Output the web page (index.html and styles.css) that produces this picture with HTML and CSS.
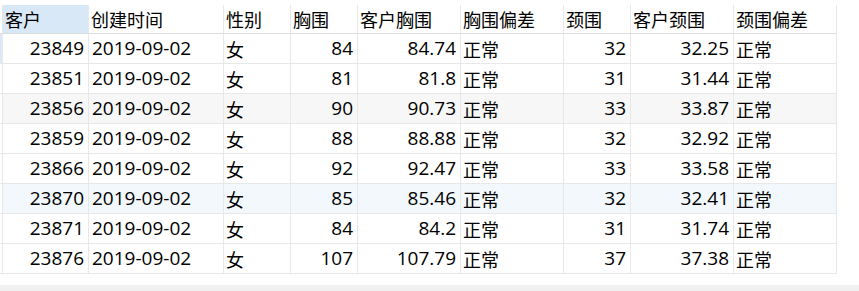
FILE: index.html
```html
<!DOCTYPE html>
<html lang="zh-CN">
<head>
<meta charset="utf-8">
<title>客户数据</title>
<link rel="stylesheet" href="styles.css">
</head>
<body>
<div class="grid">
  <div class="row head">
    <div class="gut"></div>
    <div class="c sel">客户</div>
    <div class="c">创建时间</div>
    <div class="c">性别</div>
    <div class="c">胸围</div>
    <div class="c">客户胸围</div>
    <div class="c">胸围偏差</div>
    <div class="c">颈围</div>
    <div class="c">客户颈围</div>
    <div class="c">颈围偏差</div>
  </div>
  <div class="row">
    <div class="gut cur"></div>
    <div class="c n r">23849</div><div class="c n">2019-09-02</div><div class="c">女</div>
    <div class="c n r">84</div><div class="c n r">84.74</div><div class="c">正常</div>
    <div class="c n r">32</div><div class="c n r">32.25</div><div class="c">正常</div>
  </div>
  <div class="row">
    <div class="gut"></div>
    <div class="c n r">23851</div><div class="c n">2019-09-02</div><div class="c">女</div>
    <div class="c n r">81</div><div class="c n r">81.8</div><div class="c">正常</div>
    <div class="c n r">31</div><div class="c n r">31.44</div><div class="c">正常</div>
  </div>
  <div class="row alt">
    <div class="gut"></div>
    <div class="c n r">23856</div><div class="c n">2019-09-02</div><div class="c">女</div>
    <div class="c n r">90</div><div class="c n r">90.73</div><div class="c">正常</div>
    <div class="c n r">33</div><div class="c n r">33.87</div><div class="c">正常</div>
  </div>
  <div class="row">
    <div class="gut"></div>
    <div class="c n r">23859</div><div class="c n">2019-09-02</div><div class="c">女</div>
    <div class="c n r">88</div><div class="c n r">88.88</div><div class="c">正常</div>
    <div class="c n r">32</div><div class="c n r">32.92</div><div class="c">正常</div>
  </div>
  <div class="row">
    <div class="gut"></div>
    <div class="c n r">23866</div><div class="c n">2019-09-02</div><div class="c">女</div>
    <div class="c n r">92</div><div class="c n r">92.47</div><div class="c">正常</div>
    <div class="c n r">33</div><div class="c n r">33.58</div><div class="c">正常</div>
  </div>
  <div class="row hover">
    <div class="gut"></div>
    <div class="c n r">23870</div><div class="c n">2019-09-02</div><div class="c">女</div>
    <div class="c n r">85</div><div class="c n r">85.46</div><div class="c">正常</div>
    <div class="c n r">32</div><div class="c n r">32.41</div><div class="c">正常</div>
  </div>
  <div class="row">
    <div class="gut"></div>
    <div class="c n r">23871</div><div class="c n">2019-09-02</div><div class="c">女</div>
    <div class="c n r">84</div><div class="c n r">84.2</div><div class="c">正常</div>
    <div class="c n r">31</div><div class="c n r">31.74</div><div class="c">正常</div>
  </div>
  <div class="row">
    <div class="gut"></div>
    <div class="c n r">23876</div><div class="c n">2019-09-02</div><div class="c">女</div>
    <div class="c n r">107</div><div class="c n r">107.79</div><div class="c">正常</div>
    <div class="c n r">37</div><div class="c n r">37.38</div><div class="c">正常</div>
  </div>
</div>
<div class="scrollbar"></div>
</body>
</html>
```
FILE: styles.css
```css
html, body {
  margin: 0;
  padding: 0;
  background: #ffffff;
  overflow: hidden;
  height: 291px;
}
body {
  font-family: "Microsoft YaHei", "Noto Sans CJK SC", "Noto Sans", sans-serif;
  font-size: 18px;
  color: #000000;
}
.grid {
  padding-top: 5px;
}
.row {
  display: grid;
  grid-template-columns: 3px 86px 135px 67px 67px 103px 103px 67px 103px 103px;
  height: 30px;
}
.row.head {
  height: 29px;
}
.gut,
.c {
  box-sizing: border-box;
  border-right: 1px solid #e8e8e8;
  border-bottom: 1px solid #e8e8e8;
}
.head .gut,
.head .c {
  border-bottom-color: #dcdcdc;
}
.c {
  display: flex;
  align-items: center;
  padding: 0 3px 0 2px;
  white-space: nowrap;
  overflow: hidden;
  line-height: 1;
}
.c.n {
  font-family: "Open Sans", "Noto Sans", sans-serif;
  font-size: 19px;
  padding-left: 3px;
  padding-right: 4px;
}
.c.r {
  justify-content: flex-end;
}
.c.sel {
  background: #d9e8f7;
}
.gut.cur {
  background: #dde9f7;
}
.row.alt .c {
  background: #f7f7f7;
}
.row.hover .c {
  background: #f3f8fd;
}
.scrollbar {
  margin-top: 11px;
  height: 10px;
  background: #f0f0f0;
}
```
